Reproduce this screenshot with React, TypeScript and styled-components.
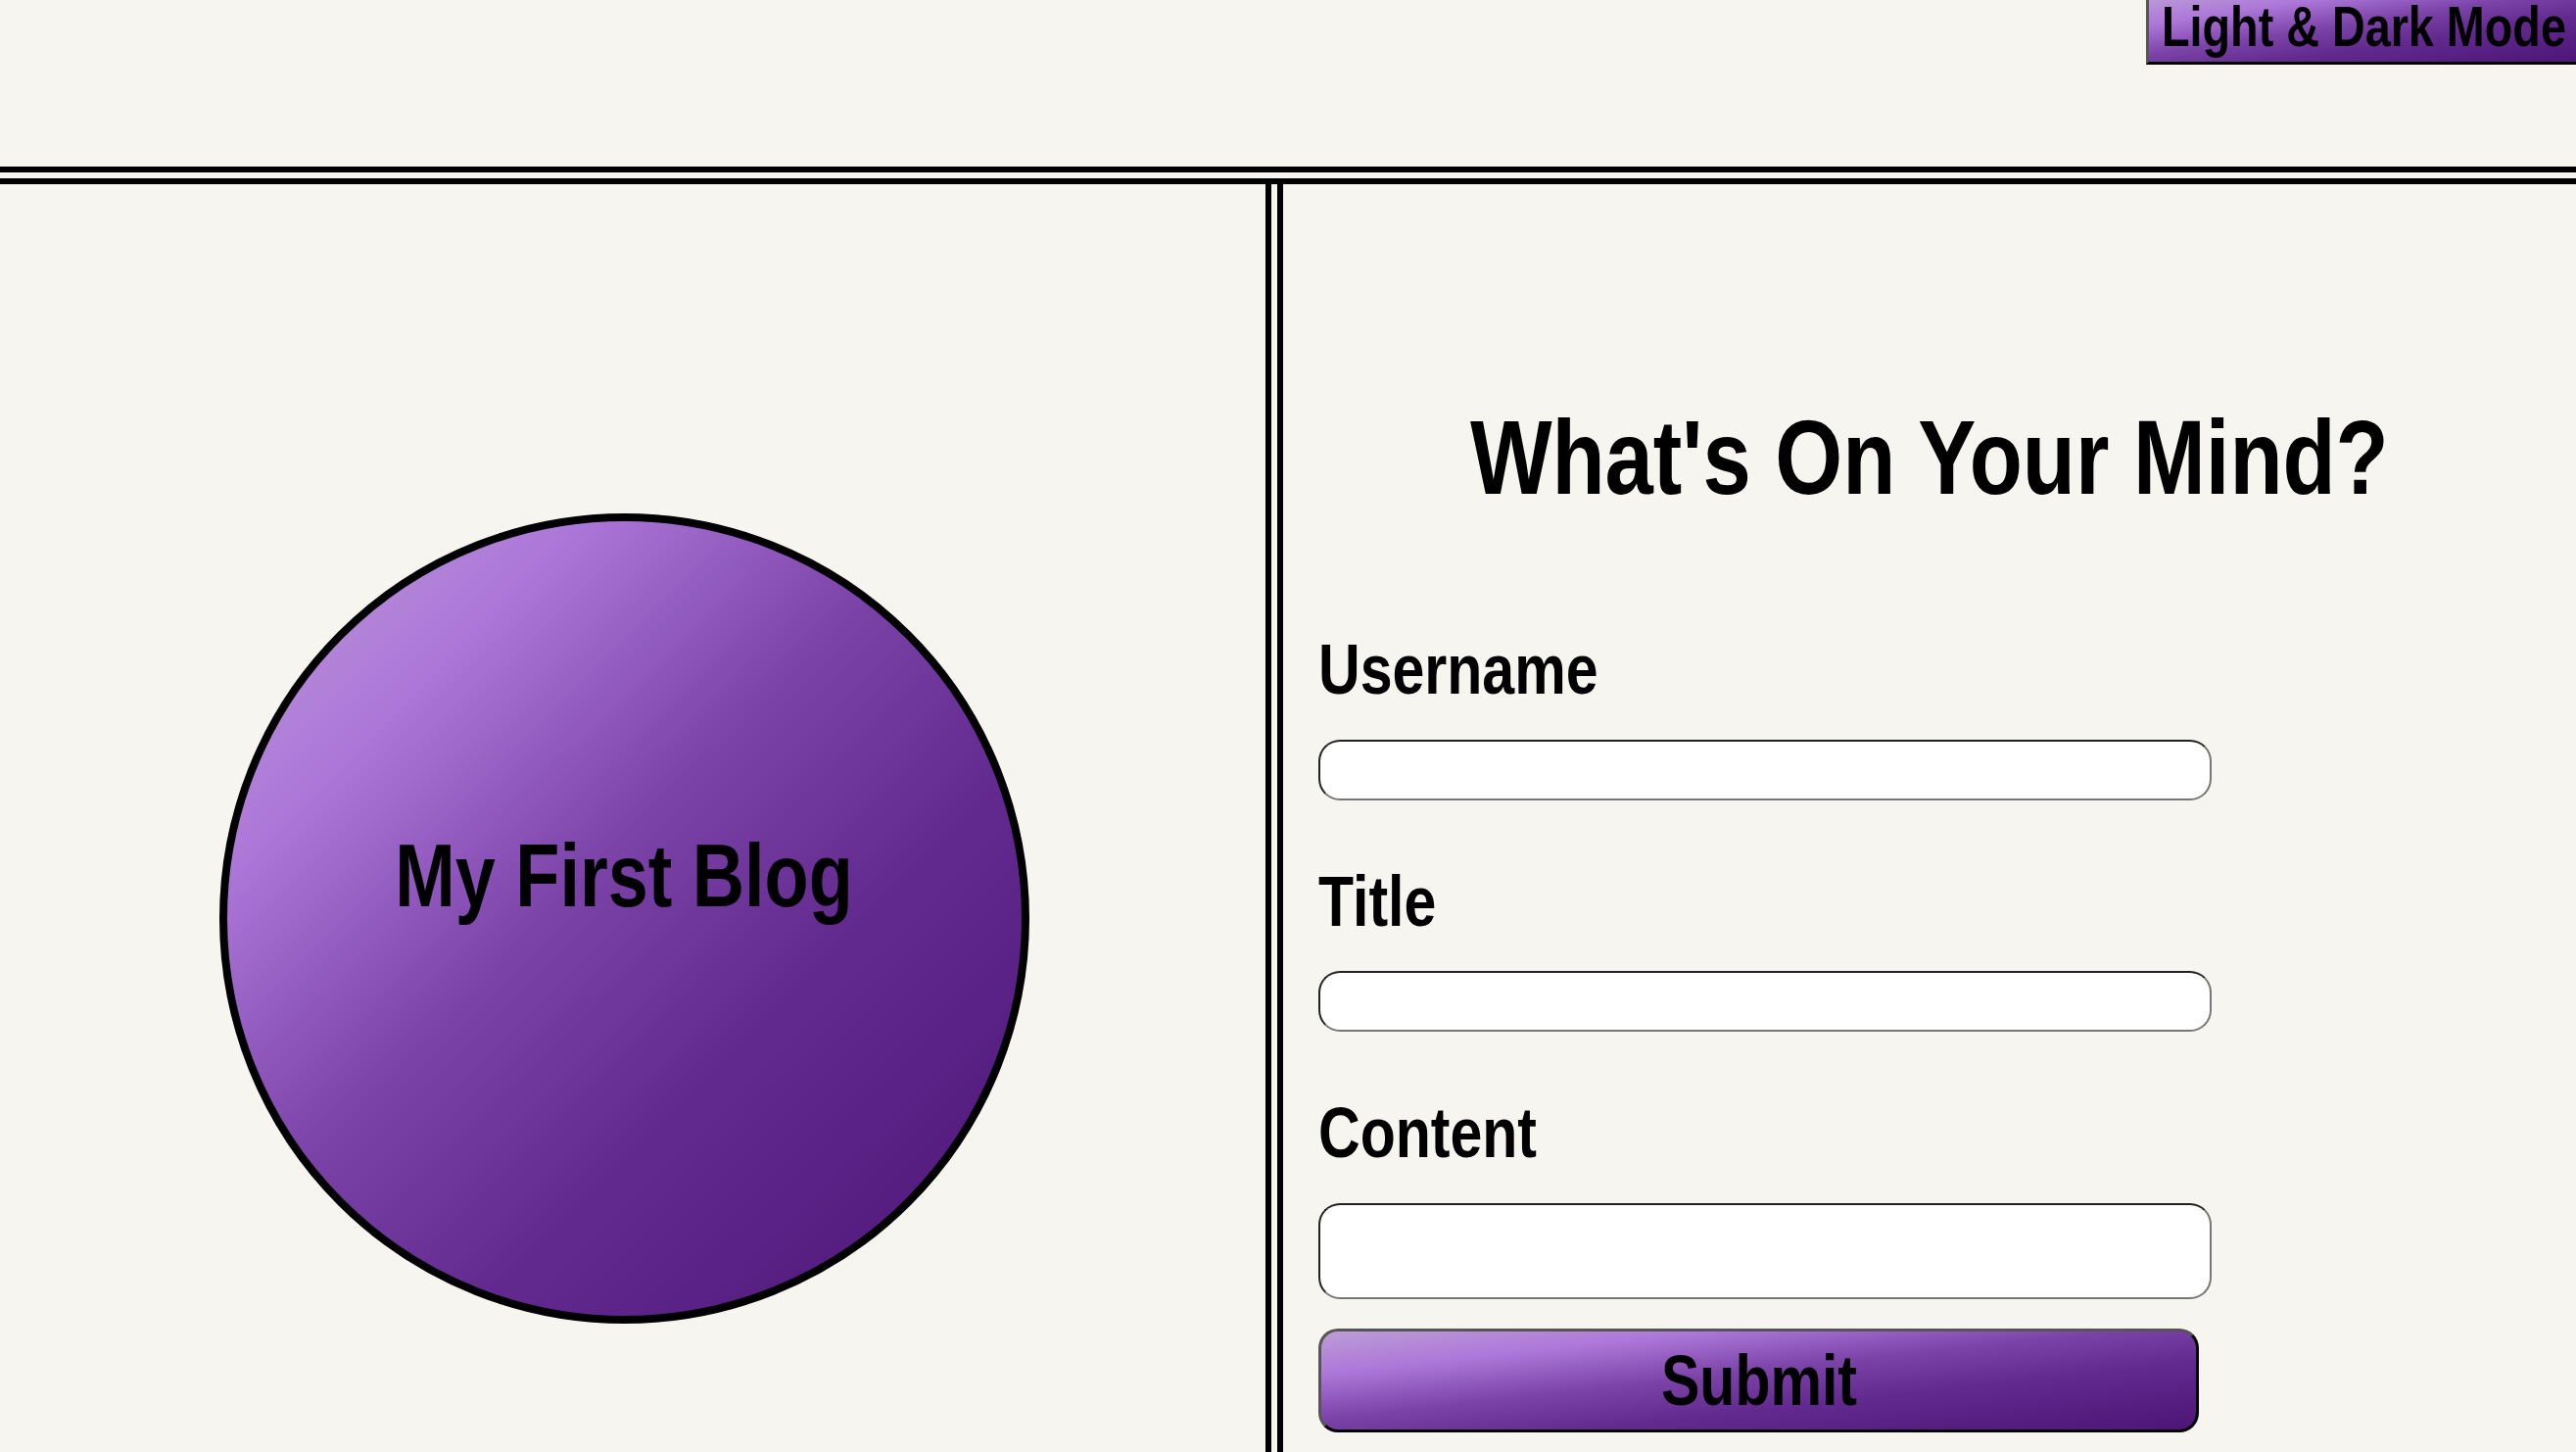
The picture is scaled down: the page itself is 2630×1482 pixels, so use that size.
import React from 'react';
import styled, { createGlobalStyle } from 'styled-components';

const GlobalStyle = createGlobalStyle`
    html, body {
        margin: 0;
        padding: 0;
        background-color: #f6f5f0;
        overflow: hidden;
    }
    * {
        box-sizing: border-box;
    }
`;

const purple = `linear-gradient(to bottom right, #bc9dd5 0%, #ad77d9 22%, #7b42a8 45%, #62298f 65%, #4d1577 100%)`;
const font = `"Liberation Sans", Arial, sans-serif`;

const Page = styled.div`
    width: 2630px;
    height: 1482px;
    display: flex;
    flex-direction: column;
    font-family: ${font};
    font-weight: bold;
    color: #000;
`;

// the reference uses a condensed face, none is installed so squeeze the regular one
const Narrow = styled.span<{ $origin?: string }>`
    display: inline-block;
    white-space: nowrap;
    transform: scaleX(0.82);
    transform-origin: ${(p) => p.$origin || 'center'};
`;

const Header = styled.header`
    height: 188px;
    flex-shrink: 0;
    display: flex;
    justify-content: flex-end;
    align-items: flex-start;
    border-bottom: 18px double #000;
`;

const ModeButton = styled.button`
    display: block;
    width: 442px;
    margin: -4px -3px 0 0;
    padding: 0 0 3px 13px;
    overflow: hidden;
    text-align: left;
    font-family: ${font};
    font-weight: bold;
    font-size: 57px;
    line-height: 1.12;
    color: #000;
    background: ${purple};
    border: 3px solid #000;
    border-top: none;
    border-left-color: #555;
    cursor: pointer;
`;

const Main = styled.main`
    flex: 1;
    display: flex;
`;

const Side = styled.section`
    width: 1310px;
    flex-shrink: 0;
    border-right: 18px double #000;
    padding: 336px 0 0 224px;
`;

const Circle = styled.div`
    width: 827px;
    height: 827px;
    border-radius: 50%;
    border: 8px solid #000;
    background: ${purple};
    padding-top: 312px;
    text-align: center;
`;

const BlogTitle = styled.h1`
    margin: 0;
    font-size: 90px;
    line-height: 1.12;
`;

const FormPanel = styled.section`
    flex: 1;
    padding: 219px 0 0 36px;
`;

const Heading = styled.h2`
    margin: 0 0 115px -36px;
    font-size: 108px;
    line-height: 1.12;
    text-align: center;
`;

const Form = styled.form`
    display: flex;
    flex-direction: column;
    align-items: flex-start;
`;

const Label = styled.label`
    font-size: 72px;
    line-height: 1.12;
    margin-bottom: 31px;
`;

const Field = styled.input<{ $tall?: boolean }>`
    width: 912px;
    height: ${(p) => (p.$tall ? '98px' : '62px')};
    margin-bottom: ${(p) => (p.$tall ? '30px' : '63px')};
    background: #fff;
    border: 2px solid;
    border-color: #222 #777 #777 #222;
    border-radius: 22px;
    font-size: 28px;
    padding: 0 16px;
`;

const Submit = styled.button`
    width: 899px;
    height: 106px;
    padding: 0;
    font-family: ${font};
    font-weight: bold;
    font-size: 72px;
    line-height: 1.12;
    color: #000;
    background: ${purple};
    border: 3px solid;
    border-color: #555 #000 #000 #555;
    border-radius: 20px;
    cursor: pointer;
`;

function App() {
    return (
        <Page>
            <GlobalStyle />
            <Header>
                <ModeButton>
                    <Narrow $origin="left">Light &amp; Dark Mode</Narrow>
                </ModeButton>
            </Header>
            <Main>
                <Side>
                    <Circle>
                        <BlogTitle>
                            <Narrow>My First Blog</Narrow>
                        </BlogTitle>
                    </Circle>
                </Side>
                <FormPanel>
                    <Heading>
                        <Narrow>What's On Your Mind?</Narrow>
                    </Heading>
                    <Form onSubmit={(e) => e.preventDefault()}>
                        <Label htmlFor="username">
                            <Narrow $origin="left">Username</Narrow>
                        </Label>
                        <Field id="username" type="text" />
                        <Label htmlFor="title">
                            <Narrow $origin="left">Title</Narrow>
                        </Label>
                        <Field id="title" type="text" />
                        <Label htmlFor="content">
                            <Narrow $origin="left">Content</Narrow>
                        </Label>
                        <Field id="content" type="text" $tall />
                        <Submit type="submit">
                            <Narrow>Submit</Narrow>
                        </Submit>
                    </Form>
                </FormPanel>
            </Main>
        </Page>
    );
}

export default App;
